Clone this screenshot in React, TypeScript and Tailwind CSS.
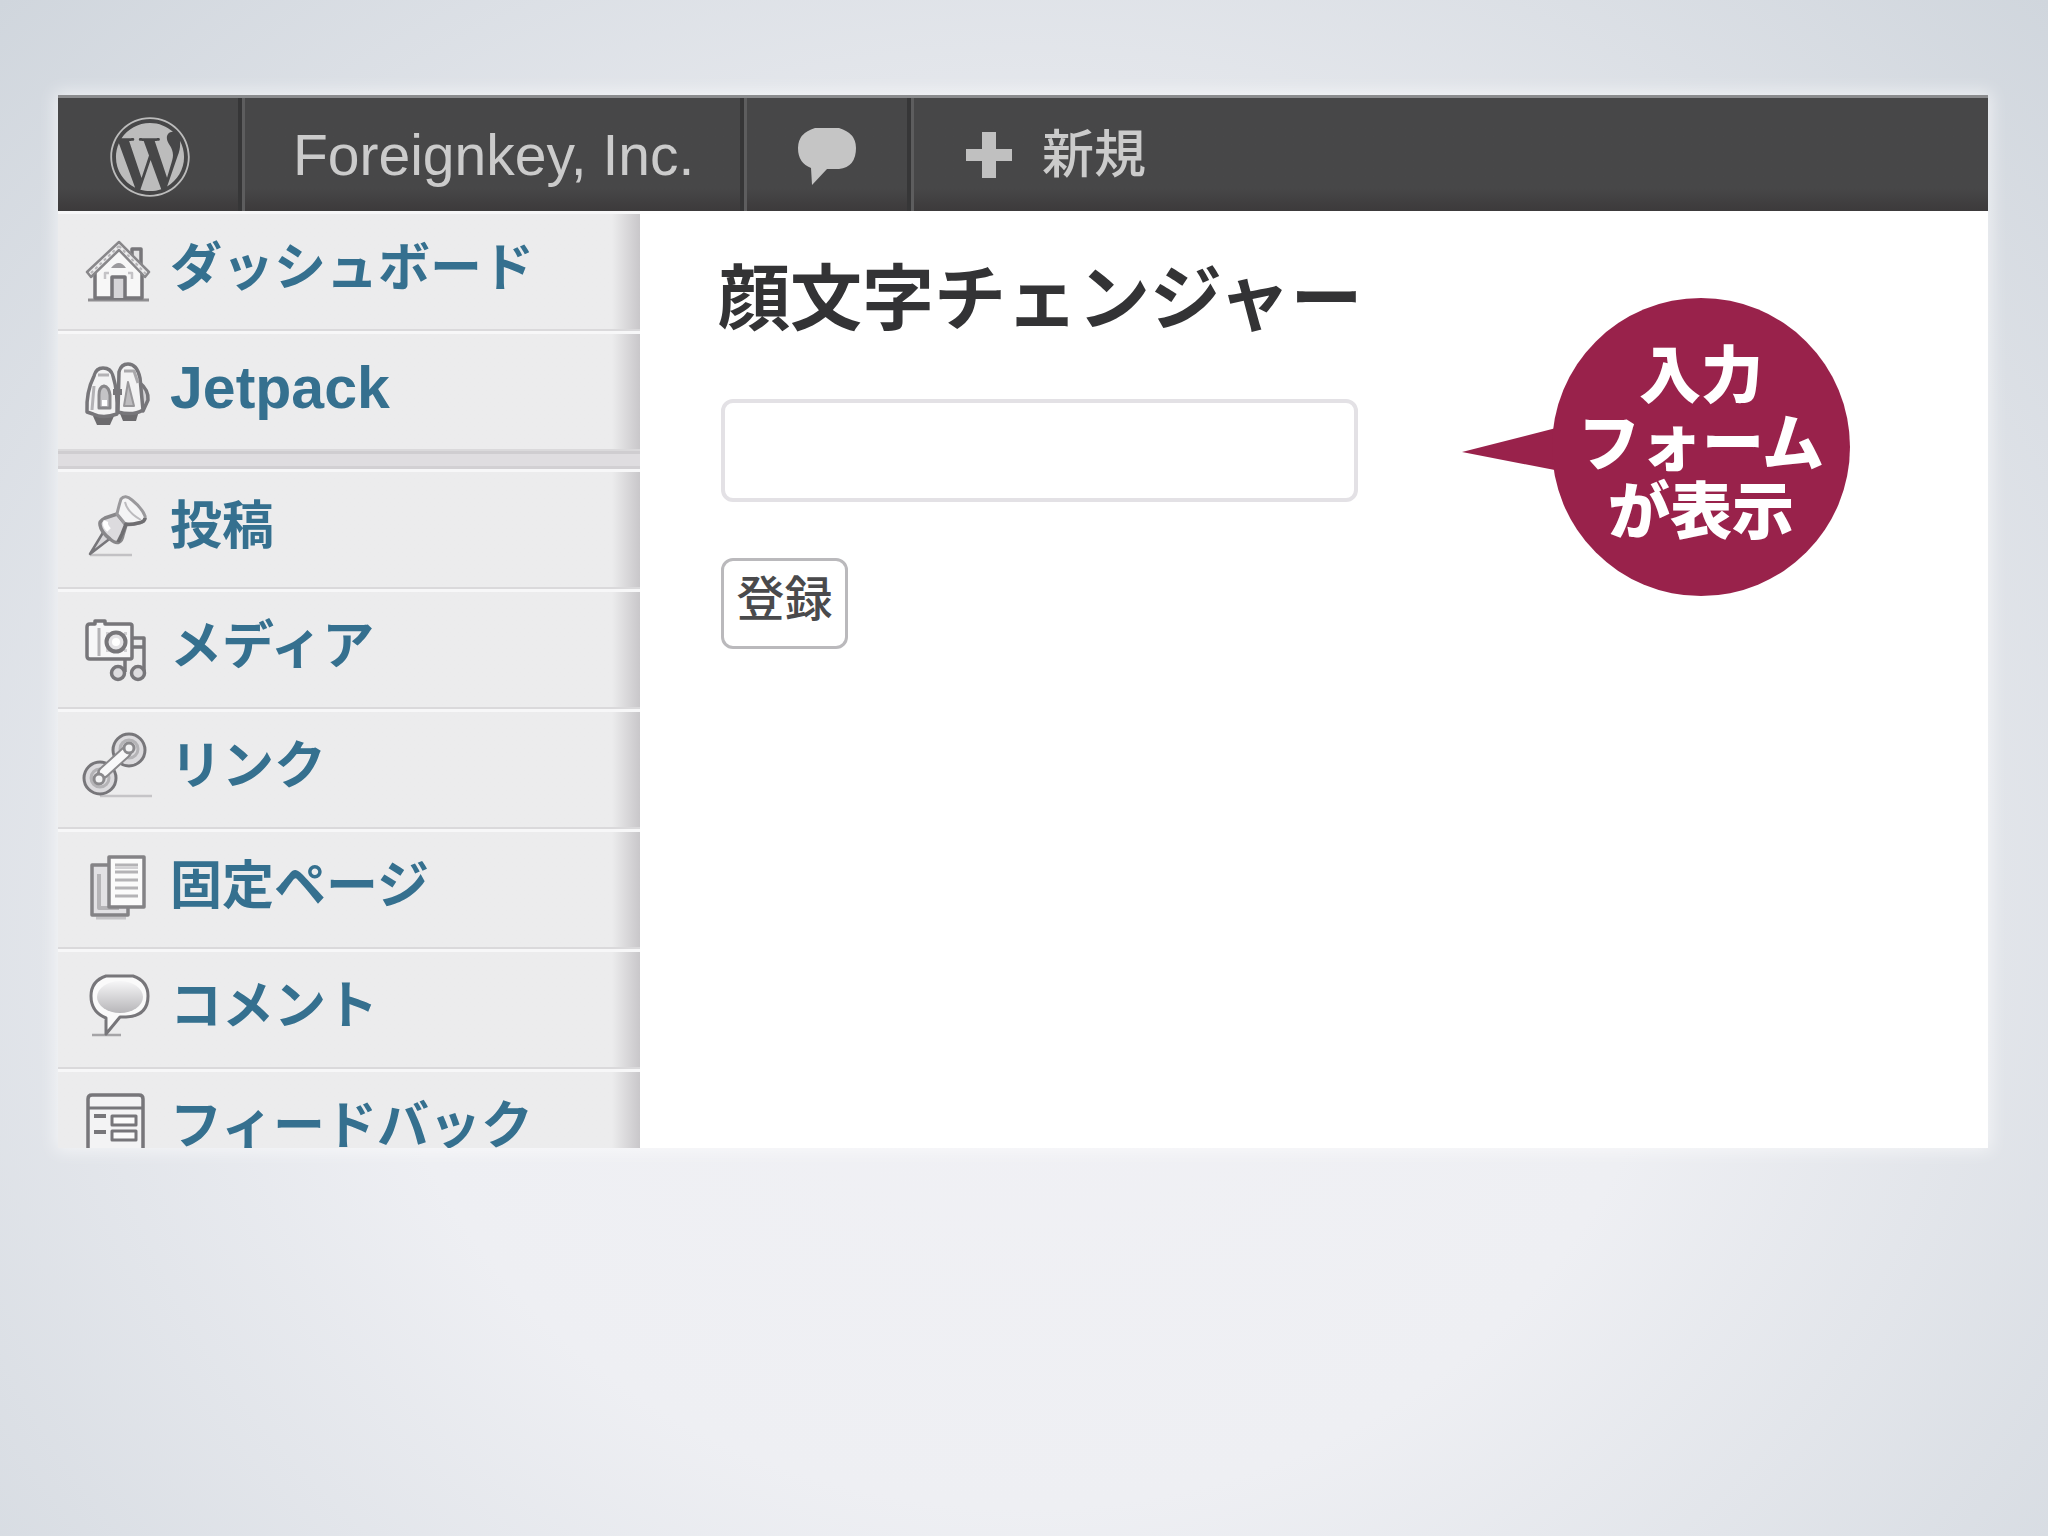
import type { ReactNode } from 'react';
import clsx from 'clsx';
import { FaWordpress } from 'react-icons/fa';

interface IconProps {
  children: ReactNode;
}

const Icon = ({ children }: IconProps) => (
  <svg
    viewBox="0 0 72 72"
    className="size-[72px] shrink-0"
    fill="none"
    stroke="#77767a"
    strokeWidth="3.5"
    strokeLinejoin="round"
    aria-hidden="true"
  >
    {children}
  </svg>
);

const DashboardIcon = () => (
  <Icon>
    <path d="M6 66h61" stroke="#8f8e91" strokeWidth="3" />
    <path d="M50 24V15h9v20" fill="#e4e4e5" />
    <path d="M13 36 37 14l23 22v28H13z" fill="#f7f7f7" />
    <path d="M37 8 5 38l4 5 28-27 26 27 4-5z" fill="#ececed" stroke="#88878a" strokeWidth="2.5" />
    <path d="M37 12 8 40M37 12l27 28" stroke="#b5b4b7" strokeWidth="2" strokeDasharray="3 3" />
    <path d="M29 34q8-10 15 0z" fill="#9b9a9d" stroke="none" />
    <path d="M23 45v-6h4M50 45v-6h-4" stroke="#c4c3c6" strokeWidth="2.5" />
    <path d="M30 64V43h13v21" fill="#d6d5d8" />
  </Icon>
);

const JetpackIcon = () => (
  <Icon>
    <path d="M37 57h20l-3 10H41z" fill="#6c6b6e" stroke="none" />
    <path d="M57 28q10 8 9 18l-5 11-5-3z" fill="#d3d2d5" />
    <path d="M37 18q2-8 9-8 9 0 12 14l3 32q-10 6-25 2z" fill="#f2f2f3" />
    <path d="M42 17h10l4 12" stroke="#a9a8ab" strokeWidth="3" />
    <path d="M46 28 42 52h10z" fill="#bdbcbf" stroke="#98979a" strokeWidth="2" />
    <path d="M11 62h21l-4 9H15z" fill="#6c6b6e" stroke="none" />
    <path d="M5 58q-1-20 7-36 2-8 9-8 8 0 10 8 5 16 4 38-14 5-24 0z" fill="#f2f2f3" />
    <path d="M16 21h11M12 32l-2 24" stroke="#b3b2b5" strokeWidth="3" />
    <path d="M17 54v-13q0-8 5-9 5 1 6 9v13z" fill="#c4c3c6" stroke="#88878a" strokeWidth="3" />
    <path d="M20 46h5v6h-5z" fill="#fff" stroke="none" />
    <path d="M31 38h9" strokeWidth="6" />
  </Icon>
);

const PostsIcon = () => (
  <Icon>
    <path d="M8 63h42" stroke="#c2c1c4" strokeWidth="2.5" />
    <path d="m22 39-14 23 22-17" fill="#d8d7da" strokeWidth="2.5" />
    <path d="M35 22 23 26q-6 3-5 7 1 7 10 14 6 5 9 3 3-1 4-7l3-10z" fill="#dcdbde" stroke="#88878a" />
    <path d="M24 29q-2 4 3 9" stroke="#fff" strokeWidth="5" />
    <path d="M39 7q4-5 11 1 10 8 13 16 1 5-5 7-8 2-14 2l-9-11q2-9 4-15z" fill="#f4f4f5" stroke="#9a999c" strokeWidth="3" />
    <path d="M63 26q0 4-7 5-7 2-12 1l-4 10-4 8" stroke="#6f6e71" strokeWidth="3.5" />
    <path d="M43 10q2 10 16 18" stroke="#bcbbbe" strokeWidth="2" />
  </Icon>
);

const MediaIcon = () => (
  <Icon>
    <path d="M50 26h12v34M50 35h12M43 47v13" />
    <circle cx="36" cy="61" r="6.5" fill="#dddcdf" />
    <circle cx="56" cy="61" r="6.5" fill="#dddcdf" />
    <path d="M13 12V9h10v3h25q2 0 2 2v31q0 2-2 2H8q-3 0-3-3V15q0-3 3-3z" fill="#f7f7f8" />
    <path d="M17 16v28" stroke="#b4b3b6" strokeWidth="3" />
    <path d="M24 20h3v20h-3zM42 20h3v3h-3zM42 37h3v3h-3z" fill="#d0cfd2" stroke="none" />
    <circle cx="34" cy="30" r="9.5" fill="#e4e3e6" strokeWidth="4" />
    <circle cx="34" cy="30" r="4" fill="#fff" stroke="none" />
  </Icon>
);

const LinksIcon = () => (
  <Icon>
    <path d="M18 64h52" stroke="#c5c4c7" strokeWidth="2.5" />
    <circle cx="47" cy="18" r="16" fill="#dcdbde" strokeWidth="3" />
    <circle cx="18" cy="46" r="16" fill="#dcdbde" strokeWidth="3" />
    <circle cx="47" cy="17" r="9" stroke="#b4b3b6" strokeWidth="3" />
    <circle cx="18" cy="46" r="9" stroke="#b4b3b6" strokeWidth="3" />
    <path d="M21 41 44 20" stroke="#8a898c" strokeWidth="12" strokeLinecap="round" />
    <path d="M22 40 43 21" stroke="#f8f8f9" strokeWidth="8" strokeLinecap="round" />
    <circle cx="47" cy="16" r="5" fill="#f2f2f3" stroke="#8a898c" strokeWidth="3" />
    <circle cx="17" cy="47" r="5" fill="#f2f2f3" stroke="#8a898c" strokeWidth="3" />
  </Icon>
);

const PagesIcon = () => (
  <Icon>
    <path d="M14 66h30" stroke="#c5c4c7" strokeWidth="3" />
    <path d="M10 13h36v50H10z" fill="#e2e1e4" stroke="#848386" />
    <path d="M17 22v34h20" stroke="#b5b4b7" strokeWidth="4" />
    <path d="M27 5h35v50H27z" fill="#fbfbfb" stroke="#848386" />
    <path d="M33 13h23M33 20h23M33 28h23M33 36h23M33 44h23" stroke="#b4b3b6" strokeWidth="3" />
    <path d="M33 16h23" stroke="#d3d2d5" strokeWidth="2" />
  </Icon>
);

const CommentsIcon = () => (
  <Icon>
    <defs>
      <linearGradient id="comment-fill" x1="0" y1="0" x2="0" y2="1">
        <stop offset="0" stopColor="#f6f6f7" />
        <stop offset="1" stopColor="#b7b6b9" />
      </linearGradient>
    </defs>
    <path d="M10 63h29" stroke="#a5a4a7" strokeWidth="2.5" />
    <path
      d="M24 4h27q15 5 15 20 0 20-22 21h-6L24 62V46Q9 40 9 24 9 9 24 4z"
      fill="#fafafa"
      strokeWidth="3"
    />
    <ellipse cx="38" cy="25" rx="23" ry="16" fill="url(#comment-fill)" stroke="none" />
  </Icon>
);

const FeedbackIcon = () => (
  <Icon>
    <path d="M6 72V7q0-4 4-4h47q4 0 4 4v65" fill="#f3f3f4" />
    <path d="M6 16h55" strokeWidth="3" />
    <path d="M12 24h12M12 40h12" strokeWidth="4" />
    <path d="M30 24h24v9H30zM30 39h24v9H30z" fill="#fbfbfb" strokeWidth="3" />
  </Icon>
);

const MENU_GROUPS = [
  [
    { label: 'ダッシュボード', icon: <DashboardIcon /> },
    { label: 'Jetpack', icon: <JetpackIcon />, latin: true },
  ],
  [
    { label: '投稿', icon: <PostsIcon /> },
    { label: 'メディア', icon: <MediaIcon /> },
    { label: 'リンク', icon: <LinksIcon /> },
    { label: '固定ページ', icon: <PagesIcon /> },
    { label: 'コメント', icon: <CommentsIcon /> },
    { label: 'フィードバック', icon: <FeedbackIcon />, cut: true },
  ],
];

const AdminBar = () => (
  <header className="flex h-[116px] items-stretch border-t-3 border-[#8b8c8e] bg-linear-to-b from-[#474748] from-80% to-[#3c3a3b] text-[#cbcbcb]">
    <a
      href="#wordpress"
      aria-label="WordPress"
      className="flex w-[184px] items-center justify-center border-r-4 border-[#363637] pt-1 pl-1 text-[#bcbcbc]"
    >
      <FaWordpress className="size-[82px]" />
    </a>
    <a
      href="#site"
      className="flex w-[502px] items-center border-r-4 border-l-3 border-r-[#363637] border-l-[#5d5d5e] pl-12 text-[57px] leading-[72px] whitespace-nowrap"
    >
      Foreignkey, Inc.
    </a>
    <a
      href="#comments"
      aria-label="コメント"
      className="flex w-[167px] items-center border-r-4 border-l-3 border-r-[#363637] border-l-[#5d5d5e] pt-1 pl-[50px]"
    >
      <svg viewBox="0 0 60 60" className="size-[60px]" fill="#c5c5c5" aria-hidden="true">
        <path d="M18 1h24q17 5 17 20 0 19-17 21H30L15 58l-1-17Q1 36 1 21 1 6 18 1z" />
      </svg>
    </a>
    <a
      href="#new"
      className="flex items-center gap-[30px] border-l-3 border-[#5d5d5e] pl-[52px] text-[52px] leading-[72px] font-medium"
    >
      <svg viewBox="0 0 46 46" className="size-[46px]" fill="#c0c0c0" aria-hidden="true">
        <path d="M16 0h14v17h16v12H30v17H16V29H0V17h16z" />
      </svg>
      新規
    </a>
  </header>
);

const Sidebar = () => (
  <nav className="w-[582px] shrink-0 bg-linear-to-l from-[#c9c7ca] to-[#ececed] to-[28px]">
    {MENU_GROUPS.map((group, index) => (
      <ul key={index}>
        {index > 0 && (
          <li
            role="separator"
            className="h-[18px] border-y-3 border-t-[#cfcdd0] border-b-[#d2d0d3] bg-[#dfdde0]"
          />
        )}
        {group.map((item) => (
          <li
            key={item.label}
            className={clsx(
              'overflow-hidden border-t-3 border-[#f7f7f8]',
              item.cut ? 'h-[79px]' : 'h-[120px] shadow-[inset_0_-2px_0_#dad9db]'
            )}
          >
            <a
              href="#menu"
              className={clsx(
                'flex items-start gap-4 pt-5 pl-6 leading-[68px] font-bold whitespace-nowrap text-[#35708f]',
                item.latin ? 'text-[59px]' : 'text-[52px]'
              )}
            >
              {item.icon}
              {item.label}
            </a>
          </li>
        ))}
      </ul>
    ))}
  </nav>
);

const Callout = () => (
  <div className="absolute top-[203px] right-[138px] flex items-center">
    <svg viewBox="0 0 98 50" className="-mr-2 h-[50px] w-[98px]" fill="#99224b" aria-hidden="true">
      <path d="M0 30 98 5v44z" />
    </svg>
    <p className="flex size-[298px] items-center justify-center rounded-full bg-[#99224b] pb-1 text-center text-[62px] leading-[68px] font-black whitespace-nowrap text-white">
      入力
      <br />
      フォーム
      <br />
      が表示
    </p>
  </div>
);

export default function App() {
  return (
    <div className="min-h-screen bg-[radial-gradient(ellipse_at_50%_60%,#f1f1f5_0%,#eeeff3_45%,#d0d6dd_100%)] pt-[95px] pr-[60px] pb-16 pl-[58px] font-['Liberation_Sans','Noto_Sans_CJK_JP',sans-serif]">
      <div className="relative bg-white shadow-[0_0_16px_3px_rgba(255,255,255,0.6)]">
        <AdminBar />
        <div className="flex">
          <Sidebar />
          <main className="flex-1 pt-[36px] pl-[78px]">
            <h1 className="text-[72px] leading-[104px] font-bold text-[#333335]">
              顔文字チェンジャー
            </h1>
            <form
              className="mt-12 ml-[3px] flex flex-col items-start gap-14"
              onSubmit={(e) => e.preventDefault()}
            >
              <input
                type="text"
                aria-label="顔文字"
                className="h-[103px] w-[637px] rounded-xl border-4 border-[#e3e1e5] bg-white px-4 text-[48px] outline-none"
              />
              <button
                type="submit"
                className="h-[91px] w-[127px] rounded-xl border-3 border-[#bab9bc] bg-white pb-2 text-[48px] leading-[72px] font-medium whitespace-nowrap text-[#4a4a4c]"
              >
                登録
              </button>
            </form>
          </main>
        </div>
        <Callout />
      </div>
    </div>
  );
}
